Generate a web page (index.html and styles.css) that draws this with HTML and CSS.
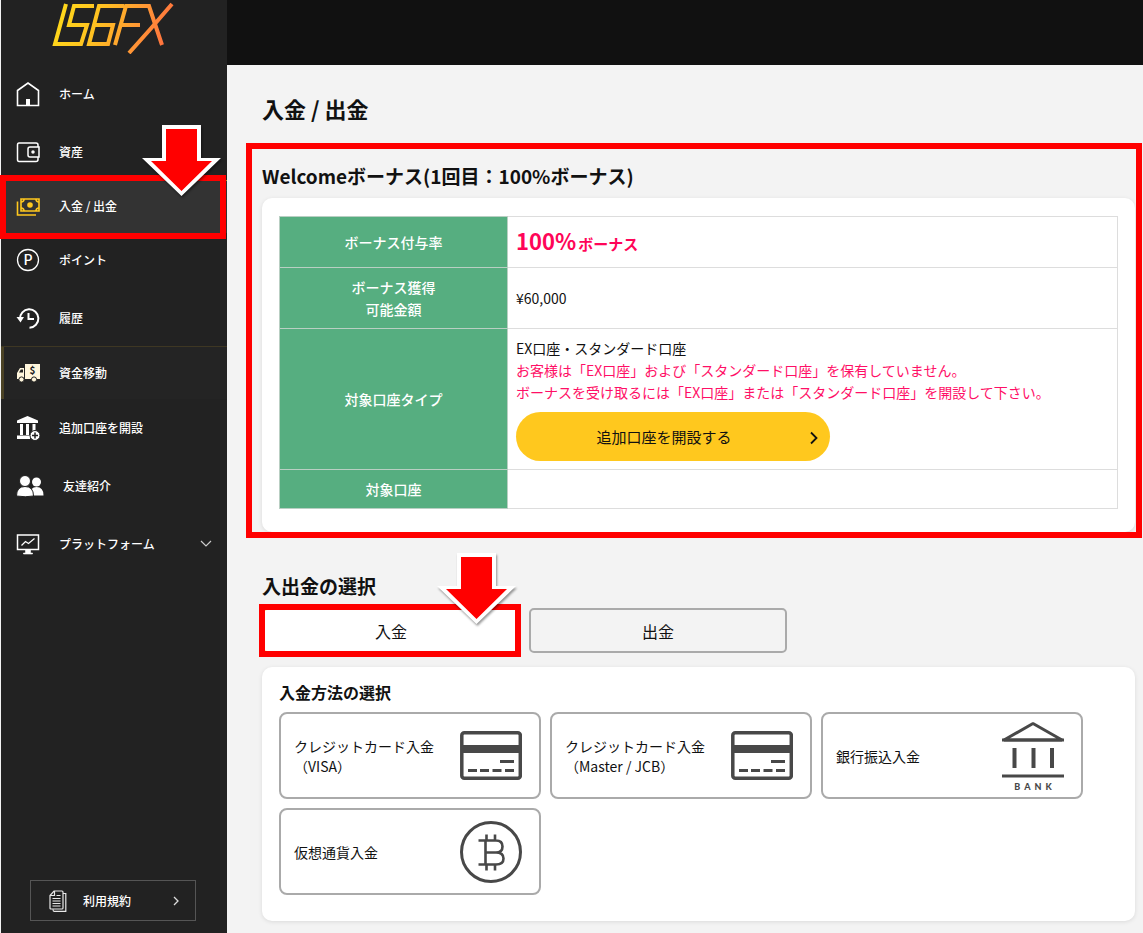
FILE: index.html
```html
<!DOCTYPE html>
<html lang="ja">
<head>
<meta charset="utf-8">
<meta name="viewport" content="width=device-width, initial-scale=1">
<title>入金 / 出金</title>
<link rel="stylesheet" href="styles.css">
</head>
<body>
<div class="app">
  <aside class="sidebar">
    <a class="logo" href="#" aria-label="IS6FX">
      <svg width="124" height="52" viewBox="0 0 124 52" fill="none" stroke="url(#logo-fill)" stroke-width="4" stroke-miterlimit="6" aria-hidden="true">
        <defs>
          <linearGradient id="logo-fill" gradientUnits="userSpaceOnUse" x1="10" y1="0" x2="120" y2="40">
            <stop offset="0" stop-color="#ffd91a"/>
            <stop offset=".35" stop-color="#ffc021"/>
            <stop offset=".7" stop-color="#ff9535"/>
            <stop offset="1" stop-color="#ff6a40"/>
          </linearGradient>
        </defs>
        <path d="M14 2 3 42H29L35 23H17L22 4H42"/>
        <path d="M72 4H47L37 42H56L61 23H42"/>
        <path d="M63 43 74 4H97L110 43M68 23H88"/>
        <path d="M120 2Q98 28 77 51"/>
      </svg>
    </a>
    <nav class="nav">
      <a class="nav-item" href="#">
        <svg class="nav-icon" viewBox="0 0 24 26" fill="none" stroke="#fff" stroke-width="1.6"><path d="M1.5 9.5 12 2l10.500 7.500V24.500H1.500Z"/><path d="M12 18v6.500" stroke-width="4"/></svg>
        <span>ホーム</span>
      </a>
      <a class="nav-item" href="#">
        <svg class="nav-icon" viewBox="0 0 24 26" fill="none" stroke="#fff" stroke-width="1.500"><path d="M22 8V6q0-2-2-2H3Q1.500 4 1.500 6v14.500q0 2 1.500 2h17q2 0 2-2V18"/><path d="M14 8h9v10h-9q-2 0-2-2v-6q0-2 2-2Z"/><circle cx="17" cy="13" r="1" fill="#fff"/></svg>
        <span>資産</span>
      </a>
      <a class="nav-item nav-item-active" href="#" aria-current="page">
        <svg class="nav-icon" viewBox="0 0 24 26" fill="none" stroke="#ffc81e" stroke-width="1.600"><path d="M1.500 8.500V22H20M5 6h18v12H5Z"/><circle cx="14" cy="12" r="2.800" fill="#ffc81e" stroke="none"/><path d="M5 9q3 0 3-3M23 9q-3 0-3-3M5 15q3 0 3 3M23 15q-3 0-3 3"/></svg>
        <span>入金 / 出金</span>
        <span class="mark mark-nav" aria-hidden="true"></span>
        <svg class="arrow arrow-nav" viewBox="0 0 80 72" aria-hidden="true"><path fill="#fff" d="M20 0h39v33h20L39.500 71 0 33h20Z"/><path fill="#f00" d="M24 4h31v32h15L39.500 66 9 36h15Z"/></svg>
      </a>
      <a class="nav-item" href="#">
        <svg class="nav-icon" viewBox="0 0 24 26" fill="none" stroke="#fff" stroke-width="1.300"><circle cx="12" cy="13" r="10.500"/><text class="icon-letter" x="12" y="18" text-anchor="middle">P</text></svg>
        <span>ポイント</span>
      </a>
      <a class="nav-item" href="#">
        <svg class="nav-icon" viewBox="0 0 24 26" fill="none" stroke="#fff" stroke-width="2"><path d="M4 14A9.200 9.200 0 1 1 13.500 22.700"/><path d="M12.500 8v6H18"/><path d="M.5 12h7.500l-3.500 5.500Z" fill="#fff" stroke="none"/></svg>
        <span>履歴</span>
      </a>
      <a class="nav-item nav-item-marked" href="#">
        <svg class="nav-icon" viewBox="0 0 24 26" fill="#fff6dc"><path d="M9 4h15v15H9ZM1 19v-6l3-5h4v11Z"/><path fill="#222" d="M3 12.500 4.800 9.500H7v3Z"/><circle cx="5.500" cy="19.500" r="2.600" stroke="#222"/><circle cx="18" cy="19.500" r="2.600" stroke="#222"/><text class="icon-dollar" x="16.500" y="14" text-anchor="middle">$</text></svg>
        <span>資金移動</span>
      </a>
      <a class="nav-item" href="#">
        <svg class="nav-icon" viewBox="0 0 24 26" fill="#fff"><path d="M1 5.500 11.500 1 22 5.500V8H1ZM4 9h3v11H4ZM10 9h3v11h-3ZM16.500 9h3v8h-3ZM1 20.500h13V24H1Z"/><circle cx="19" cy="20.500" r="5" stroke="#222"/><path d="M19 17.500v6M16 20.500h6" stroke="#222" stroke-width="1.500"/></svg>
        <span>追加口座を開設</span>
      </a>
      <a class="nav-item nav-item-wide" href="#">
        <svg class="nav-icon" viewBox="0 0 28 26" fill="#fff"><circle cx="20.500" cy="9" r="4.500"/><path d="M13 22.500q1-8.500 7.500-8.500 7 0 7 8.500Z"/><g stroke="#222" stroke-width="1"><circle cx="9" cy="8" r="5.500"/><path d="M.5 23q0-9.500 8.500-9.500t8.500 9.500q-8 1.500-17 0Z"/></g></svg>
        <span>友達紹介</span>
      </a>
      <a class="nav-item" href="#">
        <svg class="nav-icon" viewBox="0 0 24 26" fill="none" stroke="#fff" stroke-width="1.500"><path d="M1.500 4h21v14.500h-21Z"/><path d="m5.500 14.500 4-4 3 2 6-5" stroke-width="1.200"/><path d="M9.500 18.500h5V22h2v1h-9v-1h2Z" fill="#fff" stroke-width=".6"/></svg>
        <span>プラットフォーム</span>
        <svg class="nav-caret" viewBox="0 0 12 8" fill="none" stroke="#ccc" stroke-width="1.200"><path d="m1 1 5 5 5-5"/></svg>
      </a>
    </nav>
    <a class="terms" href="#">
      <svg class="terms-icon" viewBox="0 0 18 22" fill="none" stroke="#e8e8e8" stroke-width="1.200"><path d="M5 1h8q1 0 1 1v16q0 1-1 1H2q-1 0-1-1V5.500ZM5.500 1v4.500H1"/><path d="M14 3.500h2.800v17.800H5q-1 0-1-2"/><path d="M3.500 8.500h8M3.500 11h8M3.500 13.500h8M3.500 16h8M7.500 5.500h4"/></svg>
      <span>利用規約</span>
      <svg class="terms-caret" viewBox="0 0 6 10" fill="none" stroke="#ddd" stroke-width="1.300"><path d="m1 1 4 4-4 4"/></svg>
    </a>
  </aside>

  <div class="page">
    <header class="topbar"></header>
    <main class="content">
      <h1 class="page-title">入金 / 出金</h1>

      <section class="bonus">
        <h2 class="section-title">Welcomeボーナス(1回目：100%ボーナス)</h2>
        <div class="card bonus-card">
          <table class="bonus-table">
            <tbody>
              <tr>
                <th scope="row">ボーナス付与率</th>
                <td class="rate"><span class="rate-value">100%</span>ボーナス</td>
              </tr>
              <tr>
                <th scope="row">ボーナス獲得<br>可能金額</th>
                <td>¥60,000</td>
              </tr>
              <tr>
                <th scope="row">対象口座タイプ</th>
                <td>
                  <p class="line">EX口座・スタンダード口座</p>
                  <p class="line warning">お客様は「EX口座」および「スタンダード口座」を保有していません。<br>ボーナスを受け取るには「EX口座」または「スタンダード口座」を開設して下さい。</p>
                  <button class="open-account" type="button">
                    <span>追加口座を開設する</span>
                    <svg class="open-caret" viewBox="0 0 8 14" fill="none" stroke="#111" stroke-width="1.800"><path d="m1 1.500 5.500 5.500L1 12.500"/></svg>
                  </button>
                </td>
              </tr>
              <tr>
                <th scope="row">対象口座</th>
                <td></td>
              </tr>
            </tbody>
          </table>
        </div>
        <span class="mark mark-bonus" aria-hidden="true"></span>
      </section>

      <section class="transfer">
        <h2 class="section-title">入出金の選択</h2>
        <div class="tabs">
          <button class="tab tab-active" type="button" aria-pressed="true">入金
            <span class="mark mark-tab" aria-hidden="true"></span>
            <svg class="arrow arrow-tab" viewBox="0 0 80 72" aria-hidden="true"><path fill="#fff" d="M20 0h39v33h20L39.500 71 0 33h20Z"/><path fill="#f00" d="M24 4h31v32h15L39.500 66 9 36h15Z"/></svg>
          </button>
          <button class="tab" type="button" aria-pressed="false">出金</button>
        </div>
        <div class="card methods-card">
          <h3 class="methods-title">入金方法の選択</h3>
          <div class="methods">
            <button class="method" type="button">
              <span>クレジットカード入金<br>（VISA）</span>
              <svg class="method-icon" viewBox="0 0 62 70" fill="none" stroke="#484848" stroke-width="3.500"><rect x="1.800" y="11.800" width="58.500" height="45.500" rx="2.500"/><path d="M1 28h60" stroke-width="8"/><path d="M40 40.500h14M8 49.500h9M20 49.500h9M32.500 49.500h9M45 49.500h9" stroke-width="3"/></svg>
            </button>
            <button class="method" type="button">
              <span>クレジットカード入金<br>（Master / JCB）</span>
              <svg class="method-icon" viewBox="0 0 62 70" fill="none" stroke="#484848" stroke-width="3.500"><rect x="1.800" y="11.800" width="58.500" height="45.500" rx="2.500"/><path d="M1 28h60" stroke-width="8"/><path d="M40 40.500h14M8 49.500h9M20 49.500h9M32.500 49.500h9M45 49.500h9" stroke-width="3"/></svg>
            </button>
            <button class="method" type="button">
              <span>銀行振込入金</span>
              <svg class="method-icon" viewBox="0 0 62 70" fill="none" stroke="#484848" stroke-width="3"><path d="M2 19 31 2.500 60 19Z" stroke-linejoin="bevel"/><path d="M0 19h62M0 55h62"/><path d="M12.500 27v20M31.500 27v20M50 27v20" stroke-width="4"/><text class="icon-bank" x="33" y="69" text-anchor="middle">BANK</text></svg>
            </button>
            <button class="method" type="button">
              <span>仮想通貨入金</span>
              <svg class="method-icon" viewBox="0 0 62 70" fill="none" stroke="#484848" stroke-width="3"><circle cx="31" cy="35" r="29.500"/><path d="M18.500 23.500H36q6.500 0 6.500 6t-6.500 6H25M36 35.500q7.500 0 7.500 6t-7.500 6H18.500M25.500 23.500v24M26.500 17.500v6M35 17.500v6M26.500 47.500v6M35 47.500v6" stroke-width="2.600"/></svg>
            </button>
          </div>
        </div>
      </section>
    </main>
  </div>
</div>
</body>
</html>
```

FILE: styles.css
```css
* {
  box-sizing: border-box;
}

body {
  margin: 0;
  background: #f3f3f3;
  color: #111;
  font-family: "Noto Sans CJK JP", "Noto Sans", sans-serif;
  font-size: 14px;
  line-height: 22px;
}

a {
  color: inherit;
  text-decoration: none;
}

button {
  font: inherit;
  color: inherit;
  cursor: pointer;
}

h1, h2, h3, p {
  margin: 0;
}

svg {
  flex: none;
}

.app {
  display: grid;
  grid-template-columns: 226px minmax(0, 1fr);
  min-height: 100vh;
  padding-left: 1px;
}

/* Sidebar */
.sidebar {
  display: flex;
  flex-direction: column;
  padding-bottom: 12px;
  background: #222;
  color: #fff;
  font-size: 12px;
  font-weight: 500;
}

.logo {
  display: block;
  height: 65px;
  padding: 2px 0 0 51px;
}

.nav-item {
  position: relative;
  display: flex;
  align-items: center;
  gap: 19px;
  height: 58px;
  padding: 0 15px;
}

.nav-icon {
  width: 24px;
  height: 26px;
}

.nav-item-active {
  z-index: 1;
  height: 50px;
  background: #333;
  box-shadow: 0 -1px #b8941f, 0 2px #333;
}

.nav-item-marked {
  height: 52px;
  background: #242424;
  box-shadow: 0 -1px #3e3723, inset 3px 0 #4a4225;
}

.nav-item-wide .nav-icon {
  width: 28px;
}

.nav-caret {
  width: 12px;
  height: 8px;
  margin-left: auto;
}

.icon-letter {
  fill: #fff;
  stroke: none;
  font-size: 14px;
}

.icon-dollar {
  fill: #222;
  font-size: 10px;
  font-weight: 700;
}

.terms {
  display: flex;
  align-items: center;
  gap: 16px;
  height: 41px;
  margin: auto 31px 0 29px;
  padding: 0 16px 0 18px;
  border: 1px solid #555;
}

.terms-icon {
  width: 18px;
  height: 22px;
}

.terms-caret {
  width: 6px;
  height: 10px;
  margin-left: auto;
}

/* Annotations */
.mark {
  position: absolute;
  border: 6px solid #f00;
  pointer-events: none;
}

.mark-nav {
  inset: -6px 1px -8px -1px;
}

.mark-bonus {
  inset: -6px -7px -6px -16px;
}

.mark-tab {
  inset: -6px -3px -6px -5px;
}

.arrow {
  position: absolute;
  width: 80px;
  height: 72px;
  filter: drop-shadow(1px 2px 1px rgba(0, 0, 0, .4));
  pointer-events: none;
}

.arrow-nav {
  top: -56px;
  right: 5px;
}

.arrow-tab {
  top: -57px;
  right: 1px;
}

/* Main column */
.topbar {
  height: 65px;
  background: #111;
}

.content {
  padding: 27px 8px 11px 35px;
}

.page-title {
  font-size: 22px;
  font-weight: 700;
  line-height: 32px;
}

.section-title {
  margin-bottom: 6px;
  font-size: 19px;
  font-weight: 700;
  line-height: 32px;
}

.card {
  border-radius: 10px;
  background: #fff;
  box-shadow: 0 1px 4px rgba(0, 0, 0, .1);
}

.bonus {
  position: relative;
  margin-top: 25px;
  padding-top: 11px;
}

.bonus-card {
  padding: 18px 17px 23px;
}

.bonus-table {
  width: 100%;
  border-collapse: collapse;
}

.bonus-table th,
.bonus-table td {
  padding: 8px;
  border: 1px solid #ddd;
}

.bonus-table th {
  width: 228px;
  border-color: #b9cfc3;
  background: #56ae80;
  color: #fff;
  font-weight: 500;
}

.bonus-table .rate {
  padding: 8px;
  color: #ff0558;
  font-size: 15px;
  font-weight: 700;
  line-height: 31px;
}

.rate-value {
  margin-right: 2px;
  font-size: 22px;
}

.warning {
  color: #ff0f66;
}

.open-account {
  position: relative;
  display: block;
  width: 100%;
  max-width: 314px;
  height: 49px;
  margin-top: 9px;
  padding: 0 38px 0 20px;
  border: 0;
  border-radius: 25px;
  background: #ffc81e;
  font-size: 15px;
}

.open-caret {
  position: absolute;
  top: 19px;
  right: 12px;
  width: 8px;
  height: 14px;
}

.transfer {
  margin-top: 38px;
}

.tabs {
  display: flex;
  gap: 9px;
}

.tab {
  position: relative;
  flex: 0 1 258px;
  height: 45px;
  padding: 0;
  border: 2px solid #aaa;
  border-radius: 5px;
  background: #f3f3f3;
  font-size: 16px;
}

.tab-active {
  border-color: #ffc81e;
  background: #fff;
}

.methods-card {
  margin-top: 14px;
  padding: 13px 17px 26px;
}

.methods-title {
  margin-bottom: 8px;
  font-size: 16px;
  font-weight: 700;
  line-height: 24px;
}

.methods {
  display: grid;
  grid-template-columns: repeat(3, minmax(0, 262px));
  gap: 9px;
}

.method {
  display: flex;
  align-items: center;
  justify-content: space-between;
  min-height: 87px;
  padding: 0 17px 0 13px;
  border: 2px solid #aaa;
  border-radius: 8px;
  background: #fff;
  line-height: 20px;
  text-align: left;
}

.method-icon {
  width: 62px;
  height: 70px;
}

.icon-bank {
  fill: #484848;
  stroke: none;
  font-family: Lato, sans-serif;
  font-size: 9px;
  font-weight: 900;
  letter-spacing: 4px;
}
```
